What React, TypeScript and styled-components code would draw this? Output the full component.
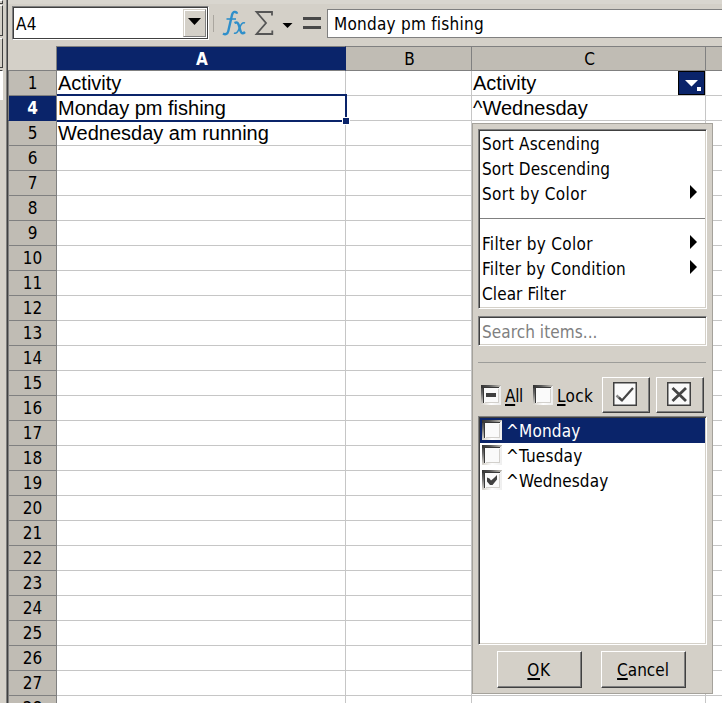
import React, { ReactNode } from 'react';
import styled, { createGlobalStyle, css } from 'styled-components';

const face = '#d4d0c8';
const header = '#c0bcb4';
const navy = '#0a246a';
const grey = '#808080';
const dark = '#404040';

const Global = createGlobalStyle`
  * { box-sizing: border-box; }
  body { margin: 0; overflow: hidden; background: ${face}; }
`;

const Screen = styled.div`
  position: relative;
  display: flex;
  width: 722px;
  height: 703px;
  overflow: hidden;
  background: ${face};
  color: #000;
  font: 17px/25px 'DejaVu Sans Condensed', 'DejaVu Sans', sans-serif;
  font-stretch: condensed;
  white-space: nowrap;
`;

const sunken = css`
  border: 1px solid;
  border-color: ${grey} #fff #fff ${grey};
  box-shadow: inset 1px 1px ${dark}, inset -1px -1px ${face};
`;
const raised = css`
  border: 1px solid;
  border-color: #fff ${dark} ${dark} #fff;
  box-shadow: inset -1px -1px ${grey};
`;

const Label = styled.span<{ $track?: number }>`
  letter-spacing: ${p => p.$track ?? 0.2}px;
`;
const Mnemonic = styled.span`
  text-decoration: underline;
  text-decoration-thickness: 2px;
  text-underline-offset: 2px;
  text-decoration-skip-ink: none;
`;

const Dock = styled.div`
  display: flex;
  flex-direction: column;
  width: 8px;
  flex: none;
  border-right: 1px solid ${dark};
  box-shadow: inset -1px 0 ${grey};
`;
const DockStub = styled.div<{ $h: number; $gap: number; $field?: boolean }>`
  width: 3px;
  height: ${p => p.$h}px;
  margin-bottom: ${p => p.$gap}px;
  border: solid;
  border-width: 1px 1px 1px 0;
  border-color: ${p => (p.$field ? `${dark} #fff #fff` : `#fff ${dark} ${dark}`)};
  background: ${p => (p.$field ? '#fff' : face)};
`;

const Main = styled.div`
  display: flex;
  flex-direction: column;
  flex: 1;
`;
const FormulaBar = styled.div`
  display: flex;
  flex: none;
  align-items: flex-start;
  height: 46px;
  padding: 2px 0 0 4px;
  border-top: 4px solid #d9d6cf;
`;
const NameBox = styled.div`
  ${sunken}
  display: flex;
  width: 197px;
  height: 34px;
  padding: 2px;
  background: #fff;
  box-shadow: inset 1px 1px ${dark}, inset -1px -1px ${dark};
`;
const NameText = styled.div`
  flex: 1;
  padding: 3px 0 0 1px;
`;
const DropButton = styled.div`
  ${raised}
  border-color: ${face} ${grey} ${grey} ${face};
  box-shadow: inset 1px 1px #fff;
  display: flex;
  align-items: flex-start;
  justify-content: flex-end;
  width: 23px;
  padding: 8px 4px 0 0;
  background: ${face};
`;
const Divider = styled.div`
  width: 1px;
  height: 17px;
  margin: 9px 8px 0 4px;
  background: #aaa69f;
`;
const Tools = styled.svg`
  flex: none;
  margin-top: 3px;
`;
const FormulaInput = styled.div`
  flex: 1;
  height: 29px;
  margin: 3px 0 0 5px;
  padding: 2px 0 0 6px;
  border: 1px solid ${grey};
  border-right: 0;
  background: #fff;
`;

const Sheet = styled.div`
  display: grid;
  grid-template-columns: 49px 289px 126px 234px 17px;
  grid-template-rows: 25px;
  grid-auto-rows: 25px;
  background: #fff;
`;
const Corner = styled.div`
  border-right: 1px solid ${grey};
  border-bottom: 1px solid ${grey};
  background: ${face};
`;
const Head = styled.div<{ $active?: boolean; $row?: boolean }>`
  padding-left: ${p => (p.$row ? 0 : 2)}px;
  border: solid ${grey};
  border-width: ${p => (p.$row ? '0 1px 1px' : '1px 1px 1px 0')};
  background: ${p => (p.$active ? navy : header)};
  color: ${p => (p.$active ? '#fff' : '#000')};
  font-weight: ${p => (p.$active ? 'bold' : 'normal')};
  text-align: center;
  line-height: ${p => (p.$row ? 25 : 24)}px;
  ${p => p.$active && (p.$row ? `border-bottom-color: ${navy};` : `border-right-color: ${navy};`)}
`;
const Cell = styled.div`
  position: relative;
  padding-left: 1px;
  border: solid #c6c6c6;
  border-width: 0 1px 1px 0;
  font: 20px/25px 'Liberation Sans', Arial, sans-serif;
`;
const Selection = styled.div`
  position: absolute;
  z-index: 1;
  inset: -2px -2px -2px 0;
  border: 2px solid ${navy};
  border-left: 0;
`;
const FillHandle = styled.div`
  position: absolute;
  right: -5px;
  bottom: -5px;
  width: 8px;
  height: 8px;
  border: 1px solid #fff;
  background: ${navy};
`;
const FilterButton = styled.div`
  position: absolute;
  right: 0;
  top: 0;
  width: 27px;
  height: 24px;
  border: 1px solid #000;
  background: ${navy};
  line-height: 0;
`;

const Popup = styled.div`
  position: absolute;
  left: 472px;
  top: 123px;
  z-index: 2;
  width: 241px;
  height: 571px;
  padding: 5px;
  border: 1px solid #a5a29b;
  background: ${face};
`;
const Menu = styled.div`
  ${sunken}
  width: 229px;
  height: 180px;
  padding: 1px;
  background: #fff;
`;
const MenuItem = styled.div`
  display: flex;
  justify-content: space-between;
  height: 25px;
  padding: 0 8px 0 2px;
  line-height: 27px;
`;
const ArrowIcon = styled.svg`
  margin-top: 4px;
`;
const MenuRule = styled.hr`
  height: 1px;
  margin: 12px 0;
  border: 0;
  background: ${grey};
`;
const Search = styled.div`
  ${sunken}
  width: 229px;
  height: 30px;
  margin-top: 7px;
  padding: 3px 3px 0;
  background: #fff;
  color: #808080;
`;
const Rule = styled.hr`
  width: 228px;
  height: 1px;
  margin: 16px 0 14px;
  border: 0;
  background: #9d9d9a;
`;
const Options = styled.div`
  display: flex;
  width: 228px;
  height: 36px;
  padding-left: 3px;
`;
const Option = styled.label<{ $w: number }>`
  display: flex;
  flex: none;
  gap: 4px;
  width: ${p => p.$w}px;
  padding-top: 6px;
  line-height: 27px;
`;
const Check = styled.svg`
  flex: none;
  margin-top: 2px;
`;
const Tool = styled.div`
  ${raised}
  flex: none;
  width: 48px;
  height: 36px;
  margin-right: 6px;
  padding: 4px 0 0 10px;
  line-height: 0;
`;
const Values = styled.div`
  ${sunken}
  width: 229px;
  height: 229px;
  margin-top: 3px;
  padding: 1px;
  background: #fff;
`;
const Value = styled.div<{ $selected?: boolean }>`
  display: flex;
  gap: 4px;
  height: 25px;
  padding-left: 2px;
  background: ${p => (p.$selected ? navy : '#fff')};
  color: ${p => (p.$selected ? '#fff' : '#000')};
  line-height: 26px;
`;
const Actions = styled.div`
  display: flex;
  gap: 19px;
  padding: 6px 0 0 19px;
`;
const Action = styled.div`
  ${raised}
  width: 85px;
  height: 37px;
  padding: 6px 1px 0 0;
  text-align: center;
`;

function CheckBox({ state }: { state?: 'on' | 'mixed' }) {
  return (
    <Check width="20" height="20" shapeRendering="crispEdges">
      <defs>
        <linearGradient id="edgeTop"><stop stopColor="#333" /><stop offset=".4" stopColor="#555" /><stop offset="1" stopColor="#c4c1ba" /></linearGradient>
        <linearGradient id="edgeLeft" x2="0" y2="1"><stop stopColor="#333" /><stop offset=".4" stopColor="#666" /><stop offset="1" stopColor="#dedbd5" /></linearGradient>
        <linearGradient id="edgeLow"><stop stopColor="#d4d0c8" /><stop offset=".5" stopColor="#fff" /><stop offset="1" stopColor="#eee" /></linearGradient>
      </defs>
      <rect width="20" height="20" fill="url(#edgeLow)" />
      <path d="M0 0H3V18L0 20Z" fill="url(#edgeLeft)" />
      <path d="M0 0H20L18 3H0Z" fill="url(#edgeTop)" />
      <path d="M2 2H18V3H3V18H2Z" fill="#383838" />
      <rect x="3" y="3" width="15" height="15" fill="#fafafa" />
      <path d="M17.5 4V17.5H4" fill="none" stroke="#d2d0cc" strokeWidth="1" />
      {state === 'mixed' && <rect x="5" y="8" width="10" height="4" fill="#404040" />}
      {state === 'on' && <path shapeRendering="auto" d="M5 7.5 7.5 8.5 9 10.5 12 8 15 5V9.5L10.5 15H8L5 11.5Z" fill="#404040" />}
    </Check>
  );
}

const Arrow = () => (
  <ArrowIcon width="7" height="14"><path d="M0 0 7 7 0 14Z" /></ArrowIcon>
);

type Item = { text: string; track?: number; sub?: boolean };
const sorting: Item[] = [
  { text: 'Sort Ascending', track: 0.17 },
  { text: 'Sort Descending', track: 0.13 },
  { text: 'Sort by Color', track: 0.37, sub: true },
];
const filtering: Item[] = [
  { text: 'Filter by Color', track: 0.31, sub: true },
  { text: 'Filter by Condition', track: 0.25, sub: true },
  { text: 'Clear Filter', track: 0.1 },
];
const renderItem = (i: Item): ReactNode => (
  <MenuItem key={i.text}><Label $track={i.track}>{i.text}</Label>{i.sub && <Arrow />}</MenuItem>
);

const rows = [1, ...Array.from({ length: 25 }, (_, i) => i + 4)];
const columnA: Record<number, string> = { 1: 'Activity', 4: 'Monday pm fishing', 5: 'Wednesday am running' };
const columnC: Record<number, string> = { 1: 'Activity', 4: '^Wednesday' };

export default function App() {
  return (
    <Screen>
      <Global />
      <Dock>
        <DockStub $h={4} $gap={1} />
        <DockStub $h={31} $gap={2} />
        <DockStub $h={30} $gap={2} />
        <DockStub $h={30} $gap={0} $field />
      </Dock>
      <Main>
        <FormulaBar>
          <NameBox>
            <NameText><Label $track={0.4}>A4</Label></NameText>
            <DropButton><svg width="13" height="7"><path d="M0 0H13L6.5 7Z" /></svg></DropButton>
          </NameBox>
          <Divider />
          <Tools width="100" height="28" viewBox="222 9 100 28" fill="none">
            <g stroke="#2f8fca">
              <path d="M237 13.8C236.5 11.2 233 11 232 15L228.3 31C227.6 34 225.5 35 223 33.5" strokeWidth="2.4" />
              <path d="M226.5 19H236" strokeWidth="1.6" />
              <path d="M234.5 23C237.5 21.5 238.3 23 239.5 27.5C240.5 32.5 241.8 35 245 32" strokeWidth="2.5" />
              <path d="M245 23C242 21.5 240.5 26 239 29C237.5 32.5 236 34 234 33" strokeWidth="1.6" />
            </g>
            <path d="M272 15.5V12H256.5L266 23 256.5 34H272.3V30.5" stroke="#555" strokeWidth="1.8" />
            <path d="M282.5 23H292.5L287.5 28Z" fill="#000" />
            <path d="M303 18.5H321M303 27.5H321" stroke="#484848" strokeWidth="3" />
          </Tools>
          <FormulaInput><Label $track={0.25}>Monday pm fishing</Label></FormulaInput>
        </FormulaBar>
        <Sheet>
          <Corner /><Head $active>A</Head><Head>B</Head><Head>C</Head><Head />
          {rows.map(n => (
            <React.Fragment key={n}>
              <Head $row $active={n === 4}>{n}</Head>
              <Cell>{columnA[n]}{n === 4 && <Selection><FillHandle /></Selection>}</Cell>
              <Cell />
              <Cell>
                {columnC[n]}
                {n === 1 && (
                  <FilterButton>
                    <svg width="25" height="22"><path d="M6 8H19L12.5 14.5ZM18 15H22V19H18Z" fill="#fff" /></svg>
                  </FilterButton>
                )}
              </Cell>
              <Cell />
            </React.Fragment>
          ))}
        </Sheet>
      </Main>
      <Popup>
        <Menu>
          {sorting.map(renderItem)}
          <MenuRule />
          {filtering.map(renderItem)}
        </Menu>
        <Search><Label $track={0.07}>Search items...</Label></Search>
        <Rule />
        <Options>
          <Option $w={52}><CheckBox state="mixed" /><Label $track={-0.3}><Mnemonic>A</Mnemonic>ll</Label></Option>
          <Option $w={69}><CheckBox /><Label $track={0.3}><Mnemonic>L</Mnemonic>ock</Label></Option>
          <Tool>
            <svg width="24" height="24"><rect x=".75" y=".75" width="22.5" height="22.5" fill="#fafafa" stroke="#404040" strokeWidth="1.5" /><path d="M3.5 13.5 9 18.5" stroke="#888" strokeWidth="2.4" /><path d="M6 15.5 9 18.5 20 6" fill="none" stroke="#444" strokeWidth="2.2" /></svg>
          </Tool>
          <Tool>
            <svg width="24" height="24"><rect x=".75" y=".75" width="22.5" height="22.5" fill="#fafafa" stroke="#404040" strokeWidth="1.5" /><path d="M5.5 6 19 19M19 6 5.5 19" stroke="#444" strokeWidth="2.8" /></svg>
          </Tool>
        </Options>
        <Values>
          <Value $selected><CheckBox /><Label>^Monday</Label></Value>
          <Value><CheckBox /><Label>^Tuesday</Label></Value>
          <Value><CheckBox state="on" /><Label $track={0.1}>^Wednesday</Label></Value>
        </Values>
        <Actions>
          <Action><Label $track={0.6}><Mnemonic>O</Mnemonic>K</Label></Action>
          <Action><Label $track={0}><Mnemonic>C</Mnemonic>ancel</Label></Action>
        </Actions>
      </Popup>
    </Screen>
  );
}
